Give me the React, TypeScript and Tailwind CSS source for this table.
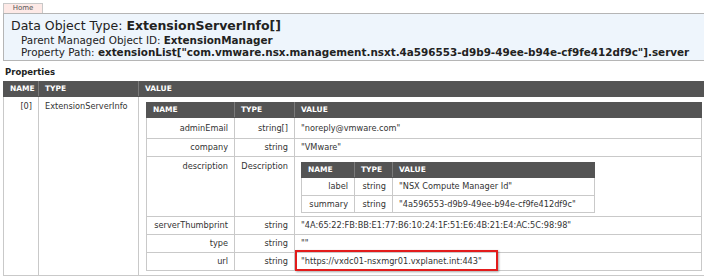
import React from 'react';

type Row = { name: string; type: string; h: string; value: React.ReactNode; top?: boolean };

const th = 'bg-[#545454] text-white font-bold text-[7.5px] text-left px-[6px] border border-[#545454] border-r-[#7a7a7a] uppercase';
const td = 'border border-[#c9c9c9] text-[8.2px] px-[6px]';

function Header({ cols }: { cols: string[] }) {
  return (
    <tr className="h-[15px]">
      {cols.map((c, i) => (
        <th key={c} className={th + (i === cols.length - 1 ? ' border-r-[#545454]' : '')}>{c}</th>
      ))}
    </tr>
  );
}

function DescriptionTable() {
  return (
    <table className="border-collapse border border-[#9a9a9a] w-[294px] table-fixed">
      <colgroup>
        <col className="w-[53px]" />
        <col className="w-[38px]" />
        <col />
      </colgroup>
      <thead>
        <Header cols={['Name', 'Type', 'Value']} />
      </thead>
      <tbody>
        <tr className="h-[18px]">
          <td className={td + ' text-right'}>label</td>
          <td className={td + ' text-right'}>string</td>
          <td className={td}>"NSX Compute Manager Id"</td>
        </tr>
        <tr className="h-[17px]">
          <td className={td + ' text-right'}>summary</td>
          <td className={td + ' text-right'}>string</td>
          <td className={td + ' whitespace-nowrap'}>"4a596553-d9b9-49ee-b94e-cf9fe412df9c"</td>
        </tr>
      </tbody>
    </table>
  );
}

const rows: Row[] = [
  { name: 'adminEmail', type: 'string[]', h: 'h-[21px]', value: '"noreply@vmware.com"' },
  { name: 'company', type: 'string', h: 'h-[18px]', value: '"VMware"' },
  { name: 'description', type: 'Description', h: 'h-[59px]', value: <DescriptionTable />, top: true },
  { name: 'serverThumbprint', type: 'string', h: 'h-[18px]', value: '"4A:65:22:FB:BB:E1:77:B6:10:24:1F:51:E6:4B:21:E4:AC:5C:98:98"' },
  { name: 'type', type: 'string', h: 'h-[18px]', value: '""' },
  {
    name: 'url',
    type: 'string',
    h: 'h-[18px]',
    value: (
      <span className="relative">
        "https://vxdc01-nsxmgr01.vxplanet.int:443"
        <span className="absolute left-[-6px] top-[-6px] w-[203px] h-[21px] border-2 border-[#e31b1b] shadow-[1px_1px_2px_rgba(0,0,0,0.35)]" />
      </span>
    ),
  },
];

function ServerInfoTable() {
  return (
    <table className="border-collapse border border-[#9a9a9a] w-[556px] table-fixed">
      <colgroup>
        <col className="w-[88px]" />
        <col className="w-[60px]" />
        <col />
      </colgroup>
      <thead>
        <Header cols={['Name', 'Type', 'Value']} />
      </thead>
      <tbody>
        {rows.map(r => (
          <tr key={r.name} className={r.h}>
            <td className={td + ' text-right ' + (r.top ? 'align-top pt-[3px]' : '')}>{r.name}</td>
            <td className={td + ' text-right ' + (r.top ? 'align-top pt-[3px]' : '')}>{r.type}</td>
            <td className={td + ' whitespace-nowrap ' + (r.top ? 'align-top pt-[5px] pb-[3px]' : '')}>{r.value}</td>
          </tr>
        ))}
      </tbody>
    </table>
  );
}

export default function App() {
  return (
    <div className="w-[704px] h-[279px] overflow-hidden bg-white text-[#333] font-['DejaVu_Sans',Verdana,sans-serif]">
      <div className="pl-[3px] pt-[3px]">
        <div className="w-[40px] h-[10px] border border-b-0 border-[#c8c8c8] bg-[#fde9e6] text-[7px] leading-[9px] text-[#555] text-center">
          Home
        </div>
        <div className="w-[720px] h-[48px] border border-[#b5b5b5] bg-[#eef5fc] pl-[7px] pt-[4px] text-[#222]">
          <div className="text-[12.5px] leading-[16px]">
            Data Object Type: <b>ExtensionServerInfo[]</b>
          </div>
          <div className="pl-[10px] text-[10.4px] leading-[12px]">
            Parent Managed Object ID: <b>ExtensionManager</b>
          </div>
          <div className="pl-[10px] text-[10.4px] leading-[12px]">
            Property Path: <b>extensionList["com.vmware.nsx.management.nsxt.4a596553-d9b9-49ee-b94e-cf9fe412df9c"].server</b>
          </div>
        </div>
        <div className="mt-[6px] text-[8.5px] leading-[10px] font-bold text-[#222] pl-[2px]">Properties</div>
        <table className="mt-[4px] border-collapse border border-[#a8a8a8] w-[702px] table-fixed">
          <colgroup>
            <col className="w-[35px]" />
            <col className="w-[100px]" />
            <col />
          </colgroup>
          <thead>
            <Header cols={['Name', 'Type', 'Value']} />
          </thead>
          <tbody>
            <tr>
              <td className={td + ' text-right align-top pt-[3px]'}>[0]</td>
              <td className={td + ' align-top pt-[3px]'}>ExtensionServerInfo</td>
              <td className="border border-[#c9c9c9] pl-[7px] pt-[5px] pb-[4px] align-top">
                <ServerInfoTable />
              </td>
            </tr>
          </tbody>
        </table>
      </div>
    </div>
  );
}
